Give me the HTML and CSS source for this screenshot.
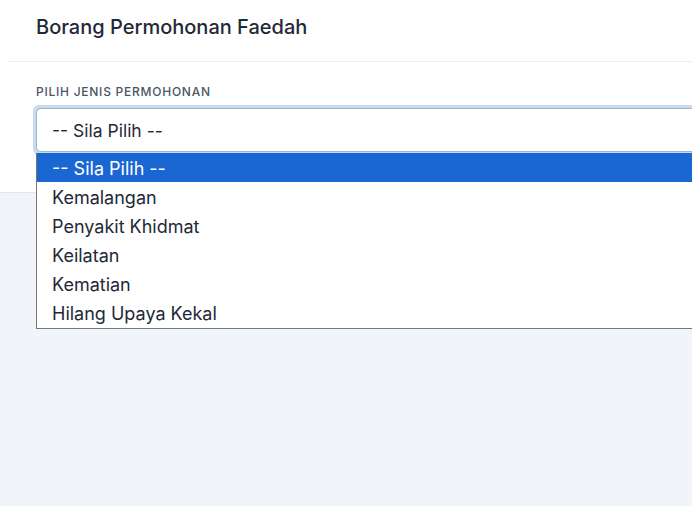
FILE: index.html
```html
<!DOCTYPE html>
<html lang="ms">
<head>
<meta charset="utf-8">
<title>Borang Permohonan Faedah</title>
<link rel="stylesheet" href="styles.css">
</head>
<body>
<div class="card">
  <div class="card-header">
    <h1 class="title">Borang Permohonan Faedah</h1>
  </div>
  <div class="card-body">
    <label class="field-label">PILIH JENIS PERMOHONAN</label>
    <div class="select-wrap">
      <div class="select">-- Sila Pilih --</div>
      <ul class="dropdown">
        <li class="option selected">-- Sila Pilih --</li>
        <li class="option">Kemalangan</li>
        <li class="option">Penyakit Khidmat</li>
        <li class="option">Keilatan</li>
        <li class="option">Kematian</li>
        <li class="option">Hilang Upaya Kekal</li>
      </ul>
    </div>
  </div>
</div>
</body>
</html>
```
FILE: styles.css
```css
html, body {
  margin: 0;
  padding: 0;
}
body {
  background: #f1f4f8;
  font-family: Inter, "Noto Sans", sans-serif;
  overflow: hidden;
  width: 692px;
  height: 506px;
}
.card {
  background: #ffffff;
  border-bottom: 1px solid #e5e7eb;
  height: 193px;
  box-sizing: border-box;
}
.card-header {
  height: 62px;
  margin-left: 8px;
  padding-left: 28px;
  padding-bottom: 8px;
  border-bottom: 1px solid #eceff2;
  box-sizing: border-box;
  display: flex;
  align-items: center;
}
.title {
  margin: 0;
  font-size: 20px;
  font-weight: 500;
  color: #1f2937;
  letter-spacing: 0;
}
.card-body {
  padding: 23px 0 0 36px;
}
.field-label {
  display: block;
  font-size: 12px;
  font-weight: 500;
  letter-spacing: 0.75px;
  color: #4b5563;
  line-height: 14px;
  margin-bottom: 9px;
}
.select-wrap {
  position: relative;
}
.select {
  height: 44px;
  box-sizing: border-box;
  border: 1px solid #9fb6cc;
  border-right: none;
  border-radius: 5px 0 0 5px;
  box-shadow: -3px 0 0 0 #c9dbec, 0 -3px 0 0 #c9dbec, 0 3px 0 0 #c9dbec, -2px -2px 0 1px #c9dbec, -2px 2px 0 1px #c9dbec;
  padding-left: 15px;
  display: flex;
  align-items: center;
  font-size: 17.5px;
  color: #1f2937;
}
.dropdown {
  position: absolute;
  top: 45px;
  left: 0;
  right: 0;
  margin: 0;
  padding: 0;
  list-style: none;
  background: #ffffff;
  border-left: 1px solid #767676;
  border-bottom: 1px solid #767676;
}
.option {
  height: 29px;
  line-height: 31px;
  padding-left: 15px;
  font-size: 18px;
  color: #1f2937;
}
.option:last-child {
  height: 30px;
}
.option.selected {
  background: #1a66d2;
  color: #ffffff;
}
```
